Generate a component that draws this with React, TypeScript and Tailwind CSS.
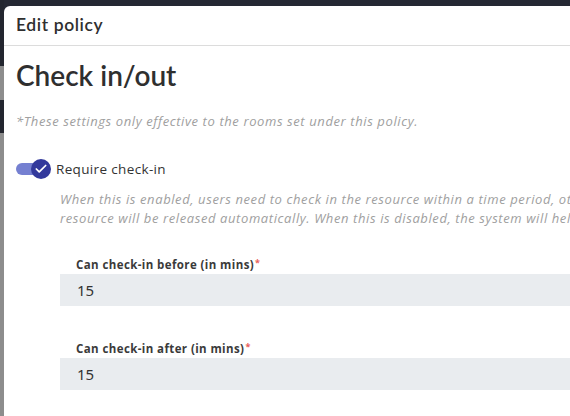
import { Check } from "lucide-react";

function Field({ label, value }: { label: string; value: string }) {
  return (
    <div className="flex flex-col">
      <label className="block h-4 pl-4 font-['Open_Sans',sans-serif] text-[11.5px] font-bold leading-[16px] tracking-[0.4px] text-[#3a3a3a]">
        {label}
        <span className="relative top-[-3px] ml-[1px] text-[9px] leading-none text-[#e8605a]">*</span>
      </label>
      <div className="mt-[1px] flex h-8 items-center bg-[#e9ecef] pl-[17px] font-['Noto_Sans',sans-serif] text-[15px] text-[#333]">
        {value}
      </div>
    </div>
  );
}

export default function App() {
  return (
    <div className="flex h-[416px] w-[570px] overflow-hidden bg-[#252833] font-['Lato',sans-serif]">
      {/* page behind the modal */}
      <div className="flex w-1 shrink-0 flex-col">
        <div className="h-[66px] bg-[#23262f]" />
        <div className="h-[34px] bg-[#8d8d8d]" />
        <div className="h-[33px] bg-[#23262f]" />
        <div className="flex-1 bg-[#8d8d8d]" />
      </div>

      {/* modal */}
      <div className="mt-[6px] w-[720px] shrink-0 rounded-tl-md bg-white">
        <div className="flex h-10 items-center border-b border-[#dcdcdc] px-3">
          <h2 className="text-[17.5px] font-semibold tracking-[0.6px] text-[#2f2f2f]">Edit policy</h2>
        </div>

        <div className="px-3">
          <h1 className="mt-[10px] text-[28px] font-semibold leading-[38px] text-[#2f2f2f]">Check in/out</h1>
          <p className="mt-[18px] font-['Open_Sans',sans-serif] text-[13px] italic leading-[18px] tracking-[0.6px] text-[#a0a0a0]">
            *These settings only effective to the rooms set under this policy.
          </p>

          <div className="mt-[29px] flex items-center">
            <div className="relative flex h-5 w-[30px] items-center">
              <div className="h-3 w-[24px] rounded-full bg-[#7580d1]" />
              <div className="absolute right-[-5px] flex h-5 w-5 items-center justify-center rounded-full bg-[#32399c]">
                <Check className="h-3.5 w-3.5 text-white" strokeWidth={3} />
              </div>
            </div>
            <span className="ml-[10px] font-['Open_Sans',sans-serif] text-[13.5px] tracking-[0.35px] text-[#333]">Require check-in</span>
          </div>

          <p className="ml-11 mt-[11px] whitespace-nowrap font-['Open_Sans',sans-serif] text-[13px] italic leading-[19px] tracking-[0.6px] text-[#a0a0a0]">
            When this is enabled, users need to check in the resource within a time period, otherwise the
            <br />
            resource will be released automatically. When this is disabled, the system will help users check in.
          </p>

          <div className="ml-11 mt-[29px] flex flex-col gap-[35px]">
            <Field label="Can check-in before (in mins)" value="15" />
            <Field label="Can check-in after (in mins)" value="15" />
          </div>
        </div>
      </div>
    </div>
  );
}
